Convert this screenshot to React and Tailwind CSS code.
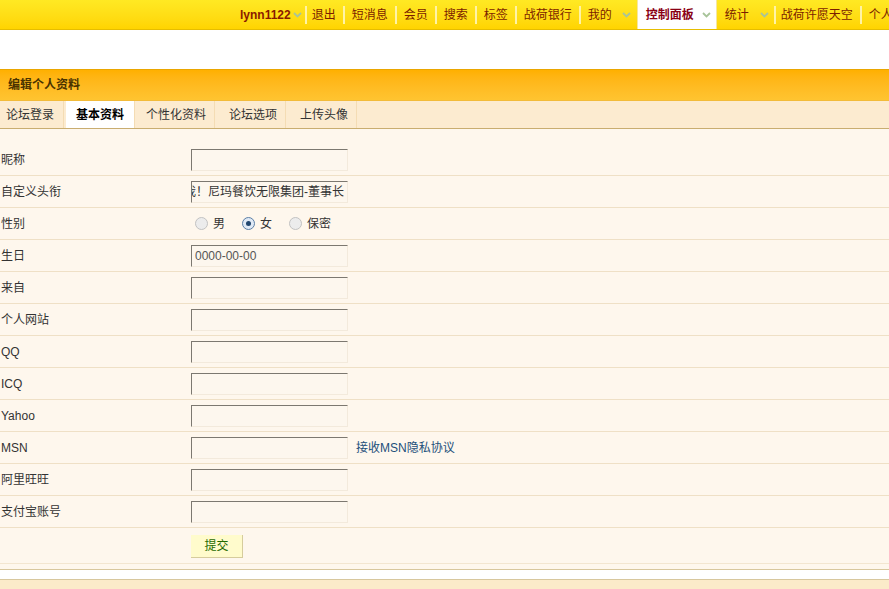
import React from 'react';

const font = { fontFamily: '"Liberation Sans", "Noto Sans CJK SC", sans-serif' };

function Chevron({ className = '' }) {
  return (
    <svg width="9" height="6" viewBox="0 0 9 6" className={'shrink-0 ' + className}>
      <path d="M1 1 L4.5 4.5 L8 1" fill="none" stroke="#a8c49a" strokeWidth="1.8" />
    </svg>
  );
}

function Sep({ className = 'mx-[7px]' }) {
  return <span className={'shrink-0 w-[2px] h-[18px] bg-[#fff3a6] ' + className} />;
}

function Item({ children, className = '' }) {
  return <span className={'shrink-0 ' + className}>{children}</span>;
}

function NavBar() {
  const items = ['短消息', '会员', '搜索', '标签', '战荷银行'];
  return (
    <div className="h-[30px] bg-gradient-to-b from-[#ffe923] to-[#ffd400] border-b border-[#e6bd00] flex items-center whitespace-nowrap overflow-hidden text-[12px] text-[#7b1d00] pl-[240px]">
      <Item className="font-bold text-[#8a1a00]">lynn1122</Item>
      <Chevron className="ml-[2px]" />
      <Sep className="ml-[3px] mr-[5px]" />
      <Item>退出</Item>
      {items.map((t) => (
        <React.Fragment key={t}>
          <Sep />
          <Item>{t}</Item>
        </React.Fragment>
      ))}
      <Sep />
      <Item>我的</Item>
      <Chevron className="ml-[10px]" />
      <div className="shrink-0 ml-[6px] h-[30px] bg-white pl-[8px] pr-[5px] flex items-center gap-[8px] border-x border-[#f6e6a0]">
        <span className="font-bold text-[#8a0014]">控制面板</span>
        <Chevron />
      </div>
      <Item className="ml-[8px]">统计</Item>
      <Chevron className="ml-[11px]" />
      <Sep className="ml-[5px] mr-[5px]" />
      <Item>战荷许愿天空</Item>
      <Sep />
      <Item>个人资料</Item>
    </div>
  );
}

function Field({ value, right }) {
  return (
    <div className="w-[157px] h-[22px] border-t border-l border-t-[#7c7870] border-l-[#7c7870] border-r border-b border-r-[#f3eadc] border-b-[#f3eadc] bg-[#fdf7ee] flex items-center overflow-hidden whitespace-nowrap text-[12px] text-[#555] px-[3px]">
      {right ? (
        <div className="w-full flex justify-end text-[#333]">{value}</div>
      ) : (
        <span>{value}</span>
      )}
    </div>
  );
}

function Radio({ checked, label }) {
  return (
    <label className="flex items-center gap-[5px]">
      <span
        className={
          'w-[13px] h-[13px] rounded-full border flex items-center justify-center ' +
          (checked ? 'border-[#5b7fa6] bg-[#dfe9f5]' : 'border-[#c2c2c2] bg-[#ececec]')
        }
      >
        {checked && <span className="w-[5px] h-[5px] rounded-full bg-[#21466e]" />}
      </span>
      <span className="text-[#333]">{label}</span>
    </label>
  );
}

function Row({ label, children }) {
  return (
    <div className="h-[32px] border-b border-[#efe0c6] flex items-center">
      <div className="w-[191px] pl-[1px] text-[#333]">{label}</div>
      <div className="flex items-center">{children}</div>
    </div>
  );
}

export default function App() {
  const tabs = ['论坛登录', '基本资料', '个性化资料', '论坛选项', '上传头像'];
  const plain = ['来自', '个人网站', 'QQ', 'ICQ', 'Yahoo'];

  return (
    <div className="w-[889px] h-[589px] overflow-hidden bg-white text-[12px]" style={font}>
      <NavBar />
      <div className="h-[39px]" />

      <div className="h-[32px] bg-gradient-to-b from-[#ffb000] to-[#ffc430] border-t border-[#eaa600] border-b border-b-[#f2bb3a] flex items-center pl-[8px]">
        <span className="font-bold text-[#4a3300]">编辑个人资料</span>
      </div>

      <div className="h-[28px] bg-[#fcebd0] border-b border-[#c9ad70] flex">
        {tabs.map((t, i) => (
          <div
            key={t}
            className={
              'h-full flex items-center border-r border-[#f4dcb4] ' +
              (i === 0 ? 'pl-[6px] pr-[9px] mr-[2px] text-[#333]' : '') +
              (i === 1 ? 'bg-white font-bold text-black px-[10px] ' : '') +
              (i > 1 ? 'pl-[11px] pr-[8px] mr-[3px] text-[#333]' : '')
            }
          >
            {t}
          </div>
        ))}
      </div>

      <div className="bg-[#fef7ed] pt-[15px] border-b border-[#d8c79d]">
        <Row label="昵称">
          <Field />
        </Row>
        <Row label="自定义头衔">
          <Field value="我！尼玛餐饮无限集团-董事长" right />
        </Row>
        <Row label="性别">
          <div className="flex items-center gap-[17px] pl-[4px]">
            <Radio label="男" />
            <Radio checked label="女" />
            <Radio label="保密" />
          </div>
        </Row>
        <Row label="生日">
          <Field value="0000-00-00" />
        </Row>
        {plain.map((l) => (
          <Row key={l} label={l}>
            <Field />
          </Row>
        ))}
        <Row label="MSN">
          <Field />
          <a className="ml-[8px] text-[#1d4f7a]">接收MSN隐私协议</a>
        </Row>
        <Row label="阿里旺旺">
          <Field />
        </Row>
        <Row label="支付宝账号">
          <Field />
        </Row>
        <div className="h-[36px] border-b border-[#f3e6d0] flex items-start pt-[7px] pl-[191px]">
          <button className="w-[52px] h-[23px] bg-[#fffbcc] border-r border-b border-[#d6cc9c] text-[#1f6a00]">
            提交
          </button>
        </div>
        <div className="h-[5px]" />
      </div>

      <div className="h-[9px] bg-white" />
      <div className="h-[20px] bg-[#fbebc9] border-t border-[#d8c79d]" />
    </div>
  );
}
